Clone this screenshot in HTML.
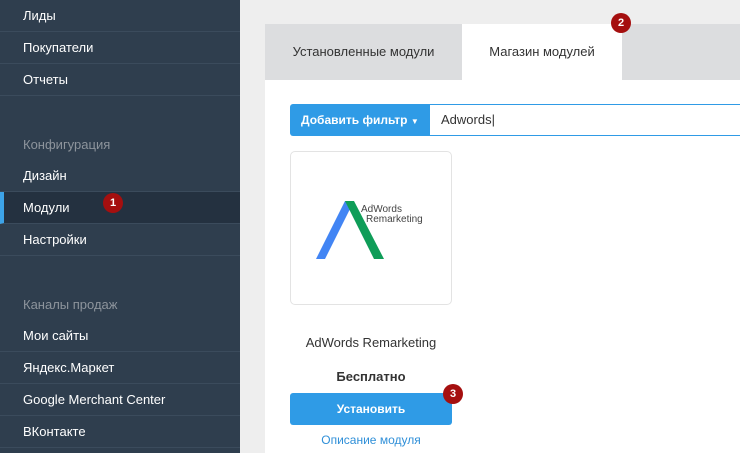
<!DOCTYPE html>
<html><head><meta charset="utf-8"><style>
*{margin:0;padding:0;box-sizing:border-box}
body{width:740px;height:453px;overflow:hidden;background:#eeeeee;font-family:"Liberation Sans","DejaVu Sans",sans-serif;position:relative}
.sb{position:absolute;left:0;top:0;width:240px;height:453px;background:#2f3e4e}
.it{position:absolute;left:0;width:240px;height:32px;line-height:32px;padding-left:23px;color:#fff;font-size:13px;border-bottom:1px solid #3b4b5c}
.hd{position:absolute;left:23px;color:#8d949c;font-size:13px}
.act{background:#243140;border-left:4px solid #3da3e8;padding-left:19px}
.badge{position:absolute;width:20px;height:20px;border-radius:50%;background:#a50f0f;color:#fff;font-size:11px;font-weight:bold;text-align:center;line-height:20px}
.panel{position:absolute;left:265px;top:24px;width:475px;height:429px;background:#fff}
.tabs{position:absolute;left:0;top:0;width:475px;height:56px;background:#dcdddf}
.tab{position:absolute;top:0;height:56px;line-height:56px;font-size:13px;color:#333;text-align:center}
</style></head><body>
<div class="sb">
<div class="it" style="top:0">Лиды</div>
<div class="it" style="top:32px">Покупатели</div>
<div class="it" style="top:64px">Отчеты</div>
<div class="hd" style="top:137px">Конфигурация</div>
<div class="it" style="top:160px">Дизайн</div>
<div class="it act" style="top:192px">Модули</div>
<div class="it" style="top:224px">Настройки</div>
<div class="hd" style="top:297px">Каналы продаж</div>
<div class="it" style="top:320px">Мои сайты</div>
<div class="it" style="top:352px">Яндекс.Маркет</div>
<div class="it" style="top:384px">Google Merchant Center</div>
<div class="it" style="top:416px">ВКонтакте</div>
</div>
<div class="badge" style="left:103px;top:193px">1</div>
<div class="panel">
<div class="tabs">
<div class="tab" style="left:0;width:197px">Установленные модули</div>
<div class="tab" style="left:197px;width:160px;background:#fff">Магазин модулей</div>
</div>
<div style="position:absolute;left:25px;top:80px;width:140px;height:32px;background:#2f9be6;border-radius:3px 0 0 3px;color:#fff;font-size:12px;font-weight:bold;line-height:32px;padding-left:11px">Добавить фильтр <span style="font-size:8px">▼</span></div>
<div style="position:absolute;left:165px;top:80px;width:320px;height:32px;border:1px solid #2f9be6;border-left:none;font-size:13px;line-height:30px;padding-left:11px;color:#333">Adwords|</div>
<div style="position:absolute;left:25px;top:127px;width:162px;height:154px;border:1px solid #e3e3e3;border-radius:5px">
<svg width="162" height="154" style="position:absolute;left:-1px;top:-1px">
<polygon points="26,108 35,108 64,50 55,50" fill="#4285f4"/>
<polygon points="55,50 64,50 94,108 84,108" fill="#0f9d58"/>
<text x="71" y="61" font-size="10" fill="#444" font-family="Liberation Sans">AdWords</text>
<text x="76" y="71" font-size="10" fill="#444" font-family="Liberation Sans">Remarketing</text>
</svg></div>
<div style="position:absolute;left:25px;top:311px;width:162px;text-align:center;font-size:13px;color:#333">AdWords Remarketing</div>
<div style="position:absolute;left:25px;top:345px;width:162px;text-align:center;font-size:13px;font-weight:bold;color:#333">Бесплатно</div>
<div style="position:absolute;left:25px;top:369px;width:162px;height:32px;background:#2f9be6;border-radius:3px;color:#fff;font-size:12px;font-weight:bold;text-align:center;line-height:32px">Установить</div>
<div style="position:absolute;left:25px;top:409px;width:162px;text-align:center;font-size:12px;color:#2f8fd8">Описание модуля</div>
</div>
<div class="badge" style="left:611px;top:13px">2</div>
<div class="badge" style="left:443px;top:384px">3</div>
</body></html>
